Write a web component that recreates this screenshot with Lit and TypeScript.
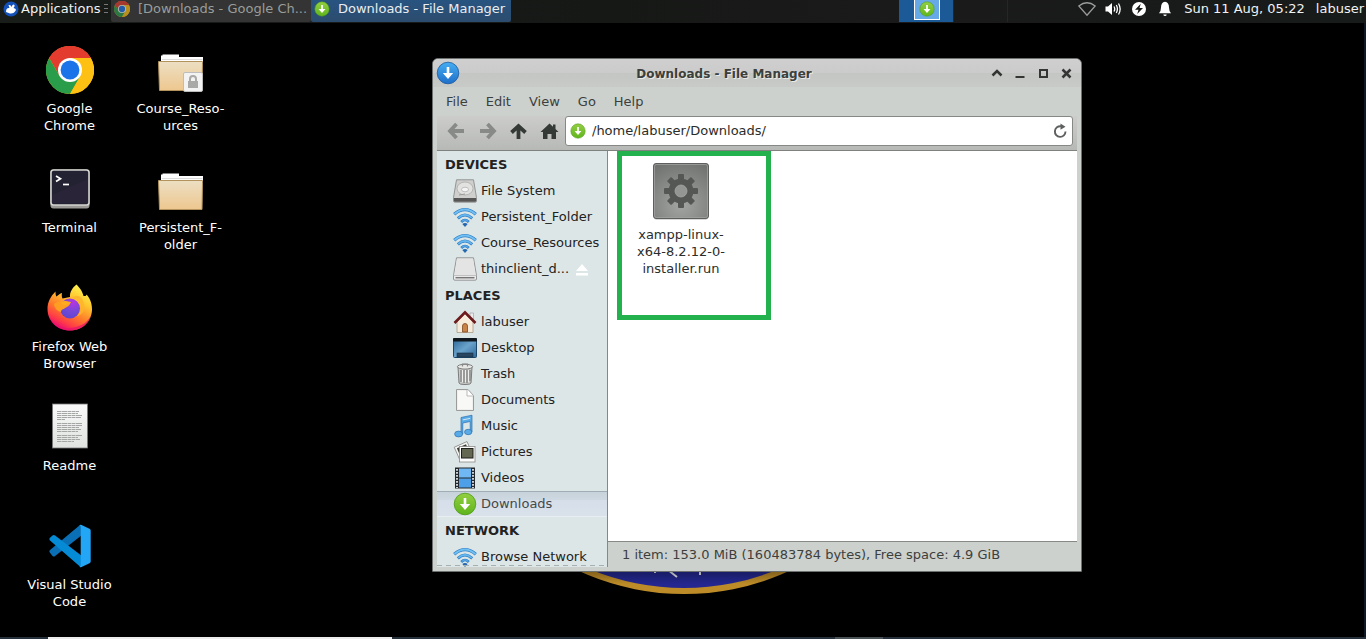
import { LitElement, html, css, TemplateResult } from "lit";
import { customElement, property } from "lit/decorators.js";
import { classMap } from "lit/directives/class-map.js";

/* ---------- shared icons ---------- */

const chromeIcon = () => html`
  <svg viewBox="0 0 48 48" aria-hidden="true">
    <circle cx="24" cy="24" r="24" fill="#fbc116" />
    <path d="M24 24 L3.2 12 A24 24 0 0 1 44.8 12 Z" fill="#e33b2e" />
    <path d="M24 12 H44.8 A24 24 0 0 0 3.2 12 L13.6 30 Z" fill="#e33b2e" />
    <path d="M3.2 12 A24 24 0 0 0 24 48 L34.4 30 L24 24 L13.6 30 Z" fill="#2a9d4a" />
    <path d="M24 12 H44.8 A24 24 0 0 1 24 48 L34.4 30 Z" fill="#fdc013" />
    <circle cx="24" cy="24" r="12" fill="#fff" />
    <circle cx="24" cy="24" r="9.4" fill="#1a73e8" />
  </svg>`;

const folderIcon = (locked = false) => html`
  <svg viewBox="0 0 48 48" aria-hidden="true">
    <defs>
      <linearGradient id="fold" x1="0" y1="0" x2="0" y2="1">
        <stop offset="0" stop-color="#ecdfc3" />
        <stop offset="1" stop-color="#eec78f" />
      </linearGradient>
    </defs>
    <path d="M4 16 V9.500 H5.500 V8.500 H22 V11 H46 V16 Z" fill="#fff" />
    <path d="M5 13.500 H45.500" stroke="#dcdcdc" />
    <path d="M1.500 15.500 H45.500 V17.500 L45 44.500 H2.500 Z" fill="url(#fold)" stroke="#b2935c" />
    ${locked
      ? html`<svg viewBox="0 0 48 48">
          <rect x="26.500" y="26.500" width="19" height="19" rx="1.500" fill="#f3f3f3" stroke="#bdbdbd" />
          <rect x="31" y="35" width="10" height="7" fill="#a9a9a7" />
          <path d="M33 35 V33 a3 3 0 0 1 6 0 V35" fill="none" stroke="#a9a9a7" stroke-width="2" />
        </svg>`
      : ""}
  </svg>`;

const terminalIcon = () => html`
  <svg viewBox="0 0 48 48" aria-hidden="true">
    <rect x="4.500" y="4.500" width="39" height="39" rx="3" fill="#9a9996" />
    <rect x="5" y="5" width="38" height="35" rx="2.500" fill="#232232" stroke="#d4d4d0" stroke-width="1.600" />
    <path d="M6 30 L42 14 V38 H6 Z" fill="#2a2638" opacity=".8" />
    <path d="M10 11 L14.500 13.700 L10 16.500" fill="none" stroke="#fff" stroke-width="1.700" />
    <path d="M17 19.500 H23" stroke="#fff" stroke-width="1.700" />
  </svg>`;

const firefoxIcon = () => html`
  <svg viewBox="0 0 48 48" aria-hidden="true">
    <defs>
      <linearGradient id="ffa" x1=".8" y1=".05" x2=".3" y2="1">
        <stop offset="0" stop-color="#fff44f" />
        <stop offset=".3" stop-color="#ffc52f" />
        <stop offset=".6" stop-color="#ff7a2a" />
        <stop offset=".82" stop-color="#ff3b47" />
        <stop offset="1" stop-color="#e5007d" />
      </linearGradient>
      <radialGradient id="ffb" cx=".65" cy=".2" r=".9">
        <stop offset="0" stop-color="#b833e1" />
        <stop offset=".5" stop-color="#7548d8" />
        <stop offset="1" stop-color="#5a45cf" />
      </radialGradient>
    </defs>
    <path d="M30.500 0.500 C33 3 36.500 7 37.500 12 C40 12.500 40.500 11 40.500 10.500 C43.500 13.500 46.200 19 46 26 C45.500 38 36 46.500 24 46.500 C11 46.500 1.500 37 1.500 25 C1.500 18 4.500 12.500 9.500 7.500 C9.500 10 9.800 11.500 10.500 12.500 C12 11 14 9.500 16 9 C15.500 11 15.800 13 16.500 14.500 L24 13 C23.500 8.500 26.500 3.500 30.500 0.500 Z" fill="url(#ffa)" />
    <path d="M4 34 C9 43 20 46 30 43 C38 41 43 36 45 31 C43 40 35 46.500 24 46.500 C14 46.500 7 41 4 34 Z" fill="#e9146c" opacity=".75" />
    <circle cx="24" cy="24.500" r="10" fill="url(#ffb)" />
    <path d="M8 20 C12 16.500 18 18 24 19.500 C24 22 20 23 18.500 24.500 C16 26 15.500 25 15 28 C11 27 8.500 24 8 20 Z" fill="#ff9f22" />
    <path d="M25 13.500 C30 14.500 34.500 18 34.500 24 C34.500 27 33.500 30 31 32 C37 31 39 26 38 20 C37 14 33 11 30 12 Z" fill="#ffb42c" opacity=".85" />
    <path d="M15 18 C18 16 22 17.500 25 18 C25 19.500 22 20.500 20 21 C17 21.500 15 20 15 18 Z" fill="#ffab1f" />
  </svg>`;

const readmeIcon = () => html`
  <svg viewBox="0 0 48 48" aria-hidden="true">
    <defs>
      <linearGradient id="pg" x1="0" y1="0" x2="0" y2="1">
        <stop offset="0" stop-color="#fafafa" />
        <stop offset="1" stop-color="#dfe2df" />
      </linearGradient>
    </defs>
    <rect x="6.500" y="1" width="35" height="44" fill="url(#pg)" stroke="#777" stroke-width=".8" />
    <g stroke="#a4a6a4" stroke-width="1" stroke-dasharray="4 .5 6 .5 3 .5">
      <path d="M11 8.500H33M11 10.500H32M11 12.500H36M11 14.500H35M11 16.500H19" />
      <path d="M11 20.500H36M11 22.500H36M11 24.500H33M11 26.500H35M11 28.500H32" />
      <path d="M11 32.500H36M11 34.500H32M11 36.500H34M11 38.500H28" />
    </g>
  </svg>`;

const codeIcon = () => html`
  <svg viewBox="0 0 48 48" aria-hidden="true">
    <path d="M34 3 L4 28 a1.800 1.800 0 0 0 0 2.700 L6.500 34 a2 2 0 0 0 2.600 0 L36 13 V3 Z" fill="#0a6fb5" />
    <path d="M34.500 45 L4 18.500 a1.800 1.800 0 0 1 0-2.700 L6.500 13.500 a2 2 0 0 1 2.600 0 L36 34 V45 Z" fill="#058ad6" />
    <path d="M33 3.200 a3 3 0 0 1 2.500-.2 L43.500 6.800 a2 2 0 0 1 1.200 1.800 V39.500 a2 2 0 0 1-1.200 1.800 L35.500 45 a3 3 0 0 1-2.500-.2 c1 0 1.700-.6 1.700-2 V5.200 c0-1.400-.7-2-1.700-2 Z" fill="#23a6f5" />
  </svg>`;

const downloadIcon = (color: "green" | "blue" = "green") => html`
  <svg viewBox="0 0 24 24" aria-hidden="true">
    <defs>
      <linearGradient id="dl-green" x1="0" y1="0" x2="0" y2="1">
        <stop offset="0" stop-color="#93cf42" />
        <stop offset="1" stop-color="#5fb51c" />
      </linearGradient>
      <linearGradient id="dl-blue" x1="0" y1="0" x2="0" y2="1">
        <stop offset="0" stop-color="#46aef2" />
        <stop offset="1" stop-color="#1f6fc9" />
      </linearGradient>
    </defs>
    <circle cx="12" cy="12" r="10.800" fill="url(#dl-${color})" stroke=${color === "green" ? "#4e9a16" : "#1f5c9e"} stroke-width=".8" />
    <path d="M10.700 6 H13.300 V12 H17.200 L12 18 L6.800 12 H10.700 Z" fill="#fff" />
  </svg>`;

const driveIcon = (disk: boolean) => html`
  <svg viewBox="0 0 24 24" aria-hidden="true">
    <path d="M3.500 0.800 H20.500 L23.500 18.500 V22 Q23.500 23.200 22 23.200 H2 Q0.500 23.200 0.500 22 V18.500 Z" fill=${disk ? "#cfcfce" : "#ededed"} stroke="#8b8b8b" stroke-width=".9" />
    ${disk
      ? html`<svg viewBox="0 0 24 24">
          <path d="M.9 19 H23.100 V22 Q23 22.800 22 22.800 H2 Q1 22.800 1 22 Z" fill="#555" />
          <ellipse cx="12" cy="9.500" rx="8" ry="6.500" fill="#e2e2e1" stroke="#a5a5a5" stroke-width=".7" />
          <ellipse cx="12" cy="10.500" rx="3.500" ry="2.300" fill="#f4f4f4" stroke="#aaa" stroke-width=".7" />
          <path d="M6 16 L12 15" stroke="#9a9a9a" />
        </svg>`
      : html`<svg viewBox="0 0 24 24">
          <path d="M4 2 H20 L22.500 18 H1.500 Z" fill="#e4e4e4" />
          <path d="M1 18.600 H23" stroke="#b0b0b0" stroke-width=".8" />
          <path d="M2.500 20.800 H21.500" stroke="#444" stroke-width="1" />
        </svg>`}
  </svg>`;

const wifiIcon = () => html`
  <svg viewBox="0 0 24 24" aria-hidden="true">
    <g fill="none">
      <path d="M1.200 9.300 Q12 0 22.800 9.300" stroke="#2f80c8" stroke-width="3.200" />
      <path d="M1.500 9 Q12 0 22.500 9" stroke="#72bff2" stroke-width="1.800" />
      <path d="M4.800 13.300 Q12 6.800 19.200 13.300" stroke="#2f80c8" stroke-width="3" />
      <path d="M5.200 13 Q12 6.800 18.800 13" stroke="#68b6ee" stroke-width="1.600" />
      <path d="M8.200 17 Q12 13 15.800 17" stroke="#2f80c8" stroke-width="2.600" />
      <path d="M8.600 16.700 Q12 13.200 15.400 16.700" stroke="#58a6e4" stroke-width="1.200" />
    </g>
    <path d="M9.300 19 Q12 17 14.700 19 L12 22 Z" fill="#2668ae" />
  </svg>`;

const houseIcon = () => html`
  <svg viewBox="0 0 24 24" aria-hidden="true">
    <path d="M17 3 h3.500 v6 h-3.500 Z" fill="#ececec" stroke="#999" stroke-width=".6" />
    <path d="M4 12 L12 4 L20 12 V22.500 H4 Z" fill="#f7ebdc" stroke="#a99a88" stroke-width=".8" />
    <path d="M1.500 13 L12 2.300 L22.500 13" fill="none" stroke="#6d1a1c" stroke-width="2.600" />
    <path d="M9.500 22 V16 a2.500 2.500 0 0 1 5 0 V22 Z" fill="#c98248" stroke="#7d4a22" stroke-width=".8" />
  </svg>`;

const screenIcon = () => html`
  <svg viewBox="0 0 24 24" aria-hidden="true">
    <defs>
      <linearGradient id="scr" x1="0" y1="0" x2="1" y2="1">
        <stop offset="0" stop-color="#2b6596" />
        <stop offset=".5" stop-color="#6aa3cb" />
        <stop offset="1" stop-color="#2e6899" />
      </linearGradient>
    </defs>
    <rect x=".5" y="2.500" width="23" height="19" rx="1" fill="url(#scr)" stroke="#1c4668" />
    <rect x="0" y="2" width="24" height="3.500" rx="1" fill="#10181f" />
    <rect x="4" y="17" width="16" height="4" fill="#27455f" stroke="#173048" stroke-width=".6" />
  </svg>`;

const trashIcon = () => html`
  <svg viewBox="0 0 24 24" aria-hidden="true">
    <path d="M5 5 H19 L18 21 Q17.800 22.500 12 22.500 T6 21 Z" fill="#c9cac8" stroke="#6e706e" stroke-width=".9" />
    <path d="M8 8 V20 M11 8 V21 M14 8 V21 M17 8 V19" stroke="#7b7d7b" stroke-width="1.200" />
    <path d="M9.500 8 V20 M12.500 8 V20 M15.500 8 V20" stroke="#efefef" />
    <ellipse cx="12" cy="4.700" rx="7.600" ry="2.400" fill="#e8e8e7" stroke="#6e706e" stroke-width=".9" />
    <path d="M9.500 4.500 V2 H14.500 V4.500" fill="none" stroke="#888" stroke-width="1.200" />
  </svg>`;

const docIcon = () => html`
  <svg viewBox="0 0 24 24" aria-hidden="true">
    <path d="M3.500 1.500 H15 L20.500 7.500 V22.500 H3.500 Z" fill="#efefee" stroke="#9b9b9a" />
    <path d="M5 3 H14 V8 H19 V21 H5 Z" fill="#f8f8f7" />
    <path d="M14 1.500 V8 H20.500" fill="#fff" stroke="#aaa" stroke-width=".8" />
  </svg>`;

const musicIcon = () => html`
  <svg viewBox="0 0 24 24" aria-hidden="true">
    <g fill="#58abe7" stroke="#2a70b0" stroke-width=".7">
      <path d="M8 3.500 L19 1.200 V18 H17.200 V7.500 L9.800 9 V20 H8 Z" />
      <ellipse cx="5.600" cy="20" rx="4" ry="2.900" />
      <ellipse cx="15.200" cy="18" rx="3.700" ry="2.700" />
    </g>
    <path d="M9.800 5.900 L17.200 4.400" stroke="#d3e6f2" stroke-width="1" />
  </svg>`;

const photosIcon = () => html`
  <svg viewBox="0 0 24 24" aria-hidden="true">
    <g transform="rotate(-24 10 11)">
      <rect x="3.500" y="4" width="14" height="13" fill="#f6f6f6" stroke="#8a8a88" stroke-width=".8" />
      <rect x="5.500" y="6" width="10" height="8.500" fill="#3a3d33" />
    </g>
    <rect x="6.500" y="6.500" width="15.500" height="15.500" fill="#fcfcfc" stroke="#8a8a88" stroke-width=".8" />
    <rect x="8.500" y="8.500" width="11.500" height="9.500" fill="#646752" stroke="#1e201c" />
  </svg>`;

const filmIcon = () => html`
  <svg viewBox="0 0 24 24" aria-hidden="true">
    <rect x="2" y="1.500" width="20" height="21" fill="#22282d" />
    <rect x="6" y="2.500" width="12" height="9" fill="#6fb8f3" />
    <rect x="6" y="12.500" width="12" height="9" fill="#4d9fe8" />
    <path d="M4 3 V22 M20 3 V22" stroke="#dfe6e9" stroke-width="1.800" stroke-dasharray="1.800 1.200" />
  </svg>`;

const gearFileIcon = () => html`
  <svg viewBox="0 0 56 58" aria-hidden="true">
    <defs>
      <radialGradient id="exe" cx=".5" cy=".75" r=".85">
        <stop offset="0" stop-color="#a3a5a3" />
        <stop offset="1" stop-color="#6f716f" />
      </radialGradient>
    </defs>
    <rect x="1" y="2" width="54" height="55" rx="3" fill="#d8d8d8" />
    <rect x=".5" y=".5" width="55" height="55" rx="2.500" fill="url(#exe)" stroke="#5d5f5d" />
    <rect x="1.500" y="1.500" width="53" height="53" rx="2" fill="none" stroke="#9fa19f" stroke-width=".8" />
    <g fill="#555755" transform="translate(28 28)">
      <rect x="-3" y="-17" width="6" height="34" rx="1" />
      <rect x="-3" y="-17" width="6" height="34" rx="1" transform="rotate(45)" />
      <rect x="-3" y="-17" width="6" height="34" rx="1" transform="rotate(90)" />
      <rect x="-3" y="-17" width="6" height="34" rx="1" transform="rotate(135)" />
      <circle r="12.500" />
      <circle r="6" fill="#949694" stroke="#a5a7a5" stroke-width=".8" />
    </g>
  </svg>`;

/* ---------- top panel ---------- */

@customElement("top-panel")
class TopPanel extends LitElement {
  static styles = css`
    :host {
      display: flex;
      flex: none;
      align-items: flex-start;
      height: 23px;
      background: linear-gradient(90deg, #181d1a 0%, #161816 45%, #1a1a1a 65%, #171b19 100%);
      color: #f2f2f2;
      overflow: hidden;
    }
    button {
      all: unset;
      box-sizing: border-box;
      display: flex;
      align-items: center;
      white-space: nowrap;
    }
    svg { display: block; width: 100%; height: 100%; }
    .label { padding-bottom: 2px; }
    .apps { gap: 2px; padding-left: 3px; width: 104px; height: 18px; }
    .mouse { width: 16px; height: 16px; flex: none; }
    .grip { width: 7px; height: 18px; display: flex; align-items: center; }
    .task { width: 200px; height: 22px; padding: 0 3px 4px; gap: 8px; border-radius: 0 0 2px 2px; }
    .task .glyph { width: 16px; height: 16px; flex: none; }
    .idle { background: #333433; color: #9a9c9a; }
    .idle .glyph { opacity: 0.65; }
    .active { background: linear-gradient(#285481, #2c4c6d); color: #e9edf1; }
    .pager { display: flex; margin-left: auto; height: 22px; }
    .space { width: 54px; border-left: 1px solid #262626; display: flex; justify-content: center; height: 22px; box-sizing: border-box; }
    .space.current { background: #1b5a97; border-color: #1b5a97; }
    .mini { box-sizing: border-box; width: 26px; height: 20px; border: 1px solid #fff; border-top: 0; background: #66a9e6; padding: 1px 4px; }
    .mini .glyph { display: block; width: 16px; height: 16px; }
    .tray { display: flex; align-items: center; height: 18px; gap: 8px; margin-left: 17px; }
    .tray .glyph { width: 18px; height: 18px; }
    .clock { margin-left: 2px; }
    .user { margin: 0 2px 0 3px; }
  `;
  render() {
    return html`
      <button class="apps">
        <span class="mouse">
          <svg viewBox="0 0 16 16" aria-hidden="true">
            <circle cx="8" cy="8" r="7.500" fill="#1350b8" />
            <path d="M3 11 Q3 6.500 6.500 7 L5.500 4 Q8 3.500 8.500 6 Q10 2.500 11.500 4 Q12 5.500 10.500 7 Q13 7.500 13 9 Q11 13 7 12.500 Z" fill="#fff" />
          </svg>
        </span>
        <span class="label">Applications</span>
      </button>
      <span class="grip">
        <svg viewBox="0 0 7 18" aria-hidden="true"><path d="M0 4.500H4M0 8.500H4M0 12.500H4" stroke="#777" /></svg>
      </span>
      <button class="task idle"><span class="glyph">${chromeIcon()}</span><span class="label">[Downloads - Google Ch...</span></button>
      <button class="task active"><span class="glyph">${downloadIcon()}</span><span class="label">Downloads - File Manager</span></button>
      <div class="pager">
        <div class="space current"><div class="mini"><span class="glyph">${downloadIcon()}</span></div></div>
        <div class="space"></div>
        <div class="space"></div>
      </div>
      <div class="tray">
        <button class="glyph" aria-label="Network">
          <svg viewBox="0 0 18 18"><path d="M.8 6 Q9 -.5 17.200 6 L9 15.300 Z" fill="none" stroke="#9c9c9c" stroke-width="1.300" /></svg>
        </button>
        <button class="glyph" aria-label="Volume">
          <svg viewBox="0 0 18 18">
            <path d="M1.500 6.500 H4 L8 3 V15 L4 11.500 H1.500 Z" fill="#fff" />
            <path d="M10 6.500 Q11.500 9 10 11.500 M12.300 5 Q14.500 9 12.300 13 M14.500 3.500 Q17.800 9 14.500 14.500" fill="none" stroke="#fff" stroke-width="1.300" />
          </svg>
        </button>
        <button class="glyph" aria-label="Power">
          <svg viewBox="0 0 18 18"><circle cx="9" cy="9" r="7" fill="#fff" /><path d="M10.800 3.800 L5 9.800 H8.500 L7.200 14 L13 8 H9.500 Z" fill="#151815" /></svg>
        </button>
        <button class="glyph" aria-label="Notifications">
          <svg viewBox="0 0 18 18"><path d="M9 1.800 Q13 2.500 13 7.500 Q13 11 15 13.300 H3 Q5 11 5 7.500 Q5 2.500 9 1.800 Z" fill="#fff" /><path d="M7.300 14.500 H10.700 Q10.500 16 9 16 T7.300 14.500 Z" fill="#fff" /></svg>
        </button>
        <span class="clock label">Sun 11 Aug, 05:22</span>
        <span class="user label">labuser</span>
      </div>
    `;
  }
}

/* ---------- desktop shortcuts ---------- */

@customElement("desktop-shortcut")
class DesktopShortcut extends LitElement {
  @property({ attribute: false }) icon?: TemplateResult;
  @property({ attribute: false }) lines: string[] = [];
  static styles = css`
    :host { display: block; }
    button {
      all: unset;
      display: flex;
      flex-direction: column;
      align-items: center;
      gap: 6px;
      width: 100%;
      color: #fff;
      line-height: 17px;
      text-align: center;
      white-space: nowrap;
    }
    .icon { width: 48px; height: 48px; }
    svg { display: block; width: 100%; height: 100%; }
    .line { display: block; }
  `;
  render() {
    return html`<button>
      <span class="icon">${this.icon}</span>
      <span>${this.lines.map((l) => html`<span class="line">${l}</span>`)}</span>
    </button>`;
  }
}

/* ---------- file manager ---------- */

interface Place {
  name: string;
  icon: TemplateResult;
  selected?: boolean;
  eject?: boolean;
}

const groups: { title: string; places: Place[] }[] = [
  {
    title: "DEVICES",
    places: [
      { name: "File System", icon: driveIcon(true) },
      { name: "Persistent_Folder", icon: wifiIcon() },
      { name: "Course_Resources", icon: wifiIcon() },
      { name: "thinclient_d...", icon: driveIcon(false), eject: true },
    ],
  },
  {
    title: "PLACES",
    places: [
      { name: "labuser", icon: houseIcon() },
      { name: "Desktop", icon: screenIcon() },
      { name: "Trash", icon: trashIcon() },
      { name: "Documents", icon: docIcon() },
      { name: "Music", icon: musicIcon() },
      { name: "Pictures", icon: photosIcon() },
      { name: "Videos", icon: filmIcon() },
      { name: "Downloads", icon: downloadIcon(), selected: true },
    ],
  },
  { title: "NETWORK", places: [{ name: "Browse Network", icon: wifiIcon() }] },
];

@customElement("file-manager")
class FileManager extends LitElement {
  static styles = css`
    :host {
      box-sizing: border-box;
      display: flex;
      flex-direction: column;
      padding: 0 4px 4px;
      border: 1px solid #6c706e;
      border-radius: 6px 6px 1px 1px;
      background: #cdd1cd;
      color: #3c403d;
      overflow: hidden;
    }
    button { all: unset; box-sizing: border-box; }
    svg { display: block; width: 100%; height: 100%; }
    .titlebar {
      display: flex;
      align-items: center;
      height: 28px;
      flex: none;
      margin: 0 -4px;
      padding: 0 6px 0 3px;
      background: linear-gradient(#cfcfcf 0, #cbcbcb 50%, #c3c6c3 50%, #c7cac7 100%);
    }
    .logo { width: 24px; height: 24px; }
    .title {
      flex: 1;
      margin: 0;
      padding-top: 2px;
      font-size: 12px;
      font-weight: bold;
      text-align: center;
      text-shadow: 1px 1px 0 #e9ebe9;
    }
    .controls { display: flex; gap: 5px; }
    .controls button { width: 18px; height: 18px; }
    .menubar { display: flex; flex: none; height: 29px; }
    .menubar button { padding: 0 9px; line-height: 24px; }
    .toolbar {
      display: flex;
      flex: none;
      align-items: flex-start;
      height: 35px;
      box-sizing: border-box;
      padding: 0 4px;
      border-bottom: 1px solid #7f827f;
      background: linear-gradient(#cccdcb, #b7b9b7);
    }
    .nav { width: 31px; height: 30px; padding: 6px; }
    .location {
      display: flex;
      flex: 1;
      align-items: center;
      box-sizing: border-box;
      height: 30px;
      border: 1px solid #858885;
      border-radius: 3px;
      background: #fff;
      padding: 0 4px;
    }
    .location .glyph { width: 16px; height: 16px; flex: none; }
    .location input {
      flex: 1;
      min-width: 0;
      border: 0;
      outline: 0;
      padding: 0 6px 2px;
      background: none;
      font: inherit;
      color: #2a2c2a;
    }
    .body { display: flex; flex: 1; min-height: 0; }
    .side {
      position: relative;
      box-sizing: border-box;
      width: 171px;
      flex: none;
      overflow: hidden;
      padding-top: 1px;
      border-right: 1px solid #858885;
      background: #dde6e7;
      color: #222;
    }
    .side::after {
      content: "";
      position: absolute;
      left: 0;
      right: 0;
      bottom: 1px;
      height: 1px;
      background: repeating-linear-gradient(90deg, #a7b0b1 0 5px, transparent 5px 9px);
    }
    .group + .group { margin-top: 1px; }
    h2 { margin: 0; padding-left: 8px; font-size: 13px; line-height: 26px; }
    ul { margin: 0; padding: 0; list-style: none; }
    .place {
      display: flex;
      align-items: center;
      gap: 4px;
      width: 100%;
      height: 26px;
      padding-left: 16px;
      white-space: nowrap;
    }
    .place .glyph { width: 24px; height: 24px; flex: none; }
    .place .name { padding-bottom: 2px; }
    .place .eject { width: 14px; height: 14px; margin-left: 2px; }
    .place.selected {
      border-top: 1px solid #9fadb5;
      border-bottom: 1px solid #e8eef2;
      background: linear-gradient(#c7d2da, #cfd9e2 35%, #d6dfe9 35%, #d9e1eb);
      color: #45494b;
    }
    .main { display: flex; flex-direction: column; flex: 1; min-width: 0; }
    .files { position: relative; flex: 1; background: #fff; padding: 12px 20px; }
    .file {
      display: flex;
      flex-direction: column;
      align-items: center;
      gap: 5px;
      width: 106px;
      line-height: 17px;
      text-align: center;
      color: #2b2d2b;
    }
    .file .icon { width: 56px; height: 58px; }
    .marker {
      position: absolute;
      left: 9px;
      top: 0;
      box-sizing: border-box;
      width: 154px;
      height: 169px;
      border: 5px solid #22b14c;
      pointer-events: none;
    }
    .status {
      flex: none;
      border-top: 1px solid #858885;
      padding: 0 14px;
      line-height: 25px;
      white-space: nowrap;
    }
  `;
  render() {
    return html`
      <header class="titlebar">
        <span class="logo">${downloadIcon("blue")}</span>
        <h1 class="title">Downloads - File Manager</h1>
        <div class="controls">
          <button aria-label="Shade"><svg viewBox="0 0 18 18"><path d="M4.500 11.500 L9 7 L13.500 11.500" fill="none" stroke="#333633" stroke-width="2.500" /></svg></button>
          <button aria-label="Minimize"><svg viewBox="0 0 18 18"><path d="M4.500 13 H13.500" stroke="#333633" stroke-width="2" /></svg></button>
          <button aria-label="Maximize"><svg viewBox="0 0 18 18"><rect x="6" y="6" width="7" height="7" fill="none" stroke="#333633" stroke-width="2" /></svg></button>
          <button aria-label="Close"><svg viewBox="0 0 18 18"><path d="M5.500 5.500 L13.500 13.500 M13.500 5.500 L5.500 13.500" stroke="#333633" stroke-width="2.500" /></svg></button>
        </div>
      </header>
      <nav class="menubar">
        ${["File", "Edit", "View", "Go", "Help"].map((m) => html`<button>${m}</button>`)}
      </nav>
      <div class="toolbar">
        <button class="nav" aria-label="Back"><svg viewBox="0 0 19 18"><path d="M9.500 2 L3 9 L9.500 16 M3.500 9 H17" fill="none" stroke="#878a87" stroke-width="3.800" /></svg></button>
        <button class="nav" aria-label="Forward"><svg viewBox="0 0 19 18"><path d="M9.500 2 L16 9 L9.500 16 M15.500 9 H2" fill="none" stroke="#878a87" stroke-width="3.800" /></svg></button>
        <button class="nav" aria-label="Up"><svg viewBox="0 0 19 18"><path d="M2.500 10.500 L9.500 4 L16.500 10.500 M9.500 4 V17" fill="none" stroke="#353a36" stroke-width="3.800" /></svg></button>
        <button class="nav" aria-label="Home"><svg viewBox="0 0 19 18"><path d="M9.500 1.500 L13 4.800 V2.500 H15.500 V7 L18.500 10 H16 V17 H11.500 V12 H7.500 V17 H3 V10 H.5 Z" fill="#353a36" /></svg></button>
        <div class="location">
          <span class="glyph">${downloadIcon()}</span>
          <input aria-label="Location" .value=${"/home/labuser/Downloads/"} />
          <button class="glyph" aria-label="Reload">
            <svg viewBox="0 0 16 16"><path d="M13.500 8.500 A5.300 5.300 0 1 1 9 3.300" fill="none" stroke="#5d605e" stroke-width="1.900" /><path d="M8.500 .5 L13.500 3.700 L8.500 6.800 Z" fill="#5d605e" /></svg>
          </button>
        </div>
      </div>
      <div class="body">
        <aside class="side">
          ${groups.map(
            (g) => html`<section class="group">
              <h2>${g.title}</h2>
              <ul>
                ${g.places.map(
                  (p) => html`<li>
                    <button class=${classMap({ place: true, selected: !!p.selected })}>
                      <span class="glyph">${p.icon}</span>
                      <span class="name">${p.name}</span>
                      ${p.eject
                        ? html`<span class="eject"><svg viewBox="0 0 14 14" aria-hidden="true"><path d="M7 2 L13 9 H1 Z M1 11 H13 V13.500 H1 Z" fill="#fff" /></svg></span>`
                        : ""}
                    </button>
                  </li>`
                )}
              </ul>
            </section>`
          )}
        </aside>
        <div class="main">
          <div class="files">
            <button class="file">
              <span class="icon">${gearFileIcon()}</span>
              <span>xampp-linux-<br />x64-8.2.12-0-<br />installer.run</span>
            </button>
            <div class="marker"></div>
          </div>
          <footer class="status">1 item: 153.0 MiB (160483784 bytes), Free space: 4.9 GiB</footer>
        </div>
      </div>
    `;
  }
}

/* ---------- page ---------- */

const shortcuts: { icon: TemplateResult; lines: string[] }[] = [
  { icon: chromeIcon(), lines: ["Google", "Chrome"] },
  { icon: terminalIcon(), lines: ["Terminal"] },
  { icon: firefoxIcon(), lines: ["Firefox Web", "Browser"] },
  { icon: readmeIcon(), lines: ["Readme"] },
  { icon: codeIcon(), lines: ["Visual Studio", "Code"] },
  { icon: folderIcon(true), lines: ["Course_Reso-", "urces"] },
  { icon: folderIcon(), lines: ["Persistent_F-", "older"] },
];

@customElement("app-root")
class AppRoot extends LitElement {
  static styles = css`
    :host {
      position: relative;
      display: flex;
      flex-direction: column;
      height: 100vh;
      background: #000;
      font: 13px/17px "DejaVu Sans", sans-serif;
      overflow: hidden;
    }
    .desktop {
      flex: 1;
      min-height: 0;
      display: grid;
      grid-auto-flow: column;
      grid-template-rows: repeat(5, 119px);
      grid-auto-columns: 111px;
      box-sizing: border-box;
      padding: 23px 0 0 14px;
      border-right: 2px solid #0e1826;
    }
    .emblem {
      position: absolute;
      left: 432px;
      top: 90px;
      width: 504px;
      height: 504px;
    }
    file-manager {
      position: absolute;
      left: 432px;
      top: 58px;
      width: 650px;
      height: 514px;
    }
    .dock { display: flex; flex: none; height: 2px; background: #25303b; }
    .dock-open { width: 344px; margin-left: 48px; background: #ededed; }
    .dock-handle { width: 48px; margin-left: 443px; background: #4b5256; }
  `;
  render() {
    return html`
      <top-panel></top-panel>
      <main class="desktop">
        ${shortcuts.map((s) => html`<desktop-shortcut .icon=${s.icon} .lines=${s.lines}></desktop-shortcut>`)}
      </main>
      <svg class="emblem" viewBox="0 0 504 504" aria-hidden="true">
        <defs>
          <linearGradient id="shade" x1="0" y1="480" x2="0" y2="494" gradientUnits="userSpaceOnUse">
            <stop offset="0" stop-color="#000" stop-opacity=".35" />
            <stop offset="1" stop-color="#000" stop-opacity="0" />
          </linearGradient>
        </defs>
        <circle cx="252" cy="252" r="252" fill="#bd8c28" />
        <circle cx="252" cy="252" r="246" fill="#23278f" />
        <path d="M223 476 V483 M231 476 L245 487 M268 476 V485" stroke="#e8e8f0" stroke-width="2" />
        <rect y="480" x="140" width="224" height="14" fill="url(#shade)" />
      </svg>
      <file-manager></file-manager>
      <div class="dock"><span class="dock-open"></span><span class="dock-handle"></span></div>
    `;
  }
}
